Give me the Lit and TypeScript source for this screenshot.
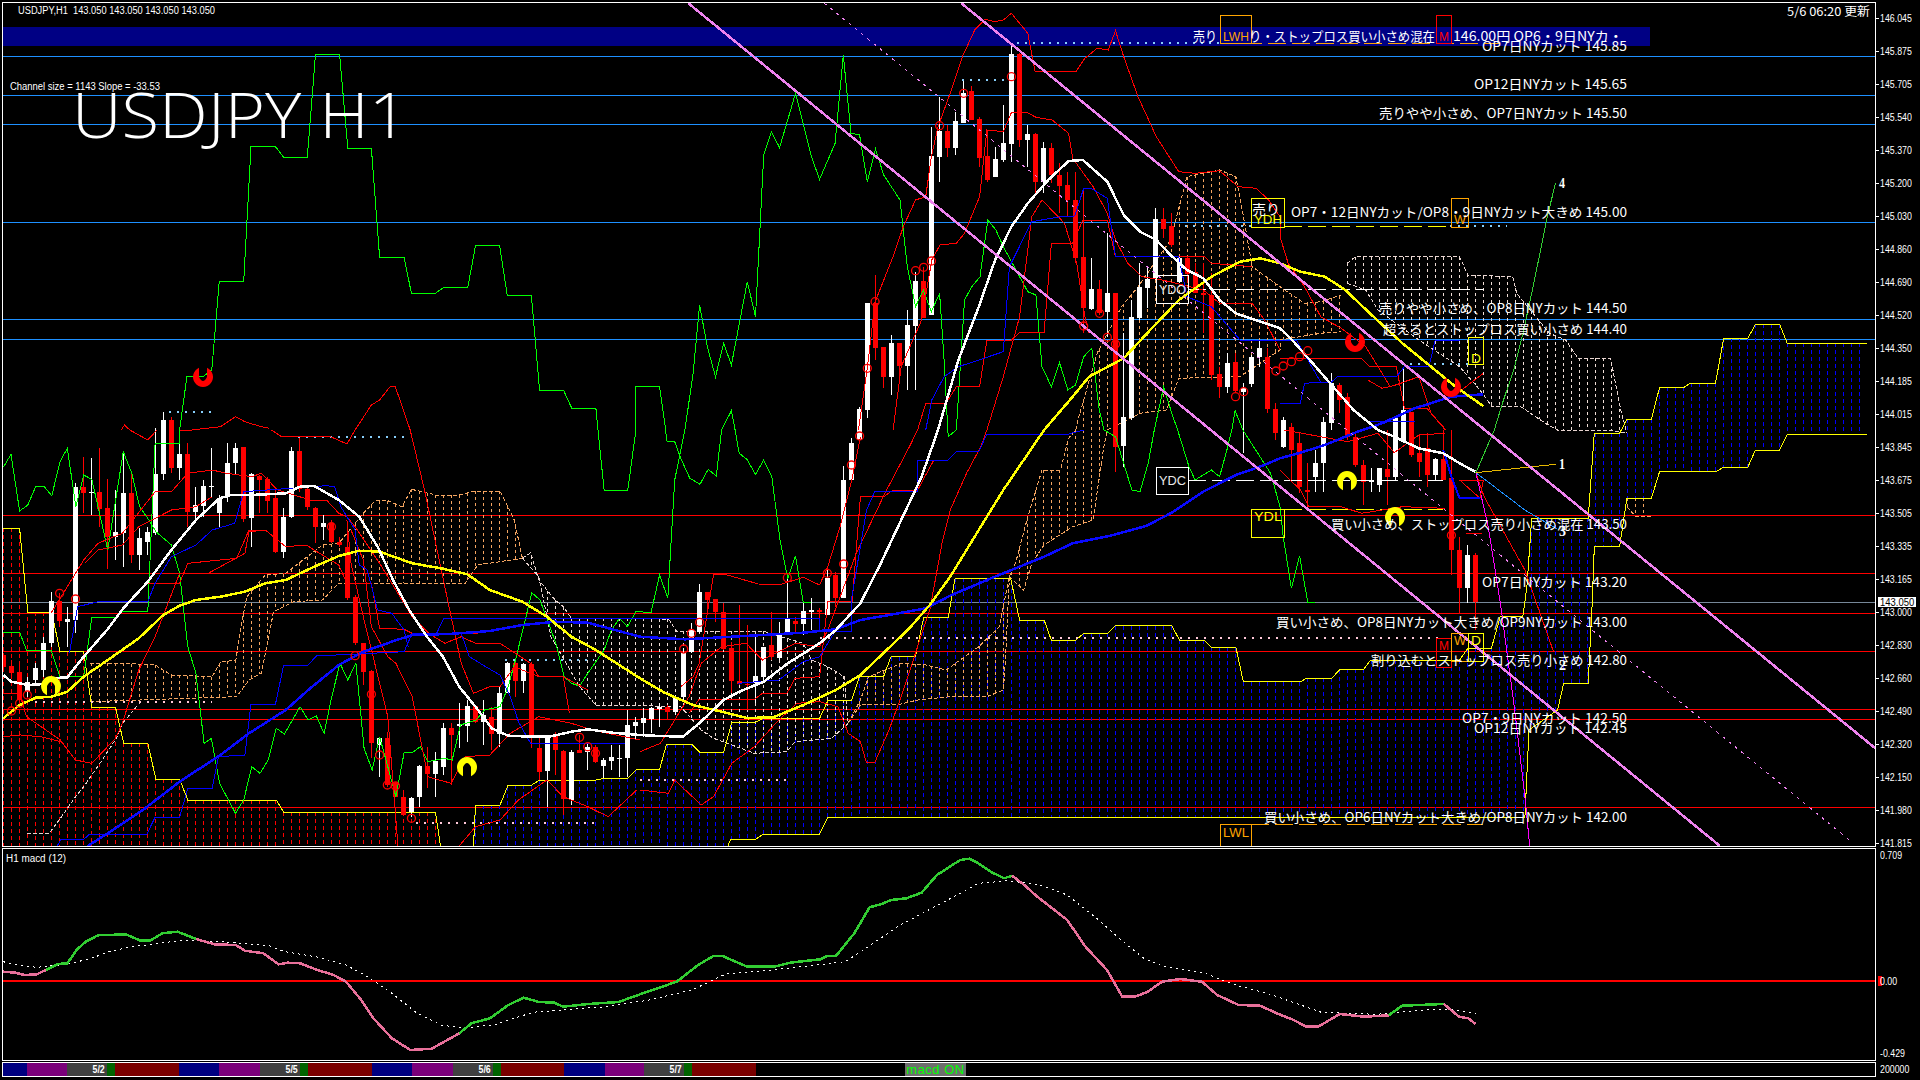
import { LitElement, html, svg, css } from 'lit';
import { customElement } from 'lit/decorators.js';

type Pt = [number, number];
const TILES: Record<string, [number, number, number]> = {
  A: [0, 0, 2.45], B: [640, 0, 2.45], C: [1280, 0, 2.45],
  D: [0, 430, 2.45], E: [640, 430, 2.45], F: [1280, 430, 2.45],
  M: [0, 830, 1.633], N: [960, 830, 1.633],
};
const p = (t: string, a: number[]): Pt[] => {
  const [x0, y0, s] = TILES[t];
  const out: Pt[] = [];
  for (let i = 0; i + 1 < a.length; i += 2) out.push([x0 + a[i] / s, y0 + a[i + 1] / 3]);
  return out;
};
const str = (pts: Pt[]) => pts.map((q) => `${q[0].toFixed(1)},${q[1].toFixed(1)}`).join(' ');
const yAt = (poly: Pt[], x: number): number => {
  for (let i = 0; i + 1 < poly.length; i++) {
    const a = poly[i], b = poly[i + 1];
    if (x >= a[0] && x <= b[0]) {
      if (b[0] === a[0]) return a[1];
      return a[1] + ((b[1] - a[1]) * (x - a[0])) / (b[0] - a[0]);
    }
  }
  return NaN;
};

/* ---------- ichimoku spans ---------- */
const Y1: Pt[] = [
  ...p('D', [0, 1600, 1155, 1600, 1160, 1248, 1165, 1125, 1225, 1125, 1245, 1065, 1303, 1065, 1322, 1050, 1460, 1050, 1480, 1045, 1538, 1045, 1558, 1020, 1568, 1018]),
  ...p('E', [0, 1018, 48, 1018, 65, 943, 127, 943, 147, 967, 205, 967, 225, 877, 283, 877, 303, 865, 440, 865, 460, 812, 518, 812, 538, 739, 597, 739, 615, 680, 675, 680, 695, 562, 755, 562, 772, 445, 908, 445, 930, 570, 990, 570, 1008, 631, 1067, 631, 1087, 610, 1146, 610, 1165, 587, 1303, 587, 1322, 631, 1382, 631, 1400, 652, 1460, 652, 1478, 755, 1568, 755]),
  ...p('F', [0, 755, 50, 755, 65, 745, 127, 745, 147, 718, 205, 718, 222, 690, 440, 690, 460, 655, 518, 655, 540, 558, 595, 558, 605, 470, 615, 295, 615, 265, 755, 265, 770, 10, 832, 10]),
  ...p('C', [850, 1258, 910, 1258, 930, 1162, 990, 1162, 1005, 1150, 1067, 1150, 1087, 1015, 1146, 1015, 1165, 973, 1224, 973, 1243, 1030, 1437, 1030]),
];
const Y2: Pt[] = [
  ...p('D', [8, 295, 48, 295, 68, 547, 127, 547, 147, 665, 205, 665, 225, 832, 283, 832, 303, 940, 362, 940, 382, 1048, 440, 1048, 460, 1110, 677, 1110, 695, 1147, 1067, 1147, 1083, 1280]),
  ...p('E', [205, 1280, 222, 1228, 283, 1228, 303, 1212, 440, 1212, 460, 1162, 1568, 1162]),
  ...p('F', [0, 1162, 600, 1162, 610, 900, 680, 840, 695, 760, 755, 760, 765, 520, 770, 350, 832, 350, 850, 205, 910, 205, 930, 125, 1067, 125, 1087, 112, 1146, 112, 1165, 60, 1224, 60, 1243, 12, 1437, 12]),
];

const BOTTOM = 846;
const hatchLines: { x: number; a: number; b: number; cls: string }[] = [];
for (let i = 0; i < 233; i++) {
  const x = 3.5 + 8 * i;
  const a = yAt(Y1, x), b = yAt(Y2, x);
  if (isNaN(a) || isNaN(b)) continue;
  const top = Math.min(a, b), bot = Math.min(Math.max(a, b), BOTTOM);
  if (top >= bot) continue;
  hatchLines.push({ x, a: top, b: bot, cls: a < b ? 'h-blue' : 'h-red' });
}

/* ---------- second (dashed outline) cloud ---------- */
const clouds: { top: Pt[]; bot: Pt[]; cls: string }[] = [
  {
    top: p('D', [220, 700, 305, 700, 380, 705, 420, 735, 520, 740, 540, 697, 578, 690, 590, 590, 605, 500, 650, 435, 700, 430, 790, 345, 830, 340, 890, 250, 920, 212, 950, 212, 985, 230, 1008, 178, 1068, 195, 1125, 195, 1165, 183, 1225, 183, 1260, 270, 1280, 385]),
    bot: p('D', [220, 815, 580, 800, 610, 750, 640, 730, 660, 610, 670, 545, 720, 515, 790, 510, 830, 460, 1140, 460, 1170, 405, 1280, 385]),
    cls: 'sandy',
  },
  {
    top: [...p('D', [1280, 385, 1300, 368, 1320, 450, 1360, 510, 1380, 530, 1400, 565, 1568, 565]), ...p('E', [0, 565, 70, 568, 90, 603, 300, 603, 400, 640, 420, 690, 460, 710, 500, 740, 510, 880])],
    bot: [...p('D', [1280, 385, 1320, 440, 1350, 620, 1420, 770, 1460, 825, 1568, 825]), ...p('E', [0, 827, 100, 830, 150, 900, 180, 925, 280, 970, 360, 965, 380, 935, 470, 925, 510, 880])],
    cls: 'pale',
  },
  {
    top: p('E', [510, 880, 540, 810, 560, 740, 640, 700, 700, 705, 750, 720, 830, 650, 880, 590, 895, 500, 905, 440]),
    bot: p('E', [510, 880, 540, 825, 640, 822, 680, 810, 760, 800, 850, 800, 890, 780, 895, 700, 905, 440]),
    cls: 'sandy',
  },
  {
    top: [...p('E', [905, 440, 920, 400, 950, 260, 985, 120, 1030, 120, 1050, 25, 1068, 0]), ...p('B', [1075, 1250, 1120, 1060, 1180, 920, 1220, 860, 1300, 720, 1340, 530, 1420, 510, 1460, 530, 1480, 660, 1500, 800, 1568, 860]), ...p('C', [0, 860, 60, 910, 100, 905, 150, 885])],
    bot: [...p('E', [905, 440, 940, 480, 960, 400, 990, 345, 1060, 290, 1110, 270, 1135, 60, 1145, 0]), ...p('B', [1145, 1290, 1225, 1240, 1290, 1230, 1320, 1135, 1470, 1130, 1568, 1050]), ...p('C', [0, 1020, 100, 1000, 150, 995])],
    cls: 'sandy',
  },
  {
    top: p('C', [165, 790, 185, 770, 440, 770, 460, 825, 570, 830, 580, 880, 660, 1000, 700, 1020, 730, 1075, 810, 1075, 835, 1230, 850, 1300]),
    bot: p('C', [165, 850, 210, 870, 240, 930, 340, 1020, 440, 1100, 490, 1170, 520, 1220, 590, 1220, 650, 1270, 680, 1290, 800, 1290, 850, 1300]),
    cls: 'pale',
  },
  { top: p('F', [850, 205, 910, 205]), bot: p('F', [850, 230, 870, 258, 910, 258]), cls: 'sandy' },
];

/* ---------- candles: u, bodyTop, bodyBottom, high, low, colour ---------- */
type C = [number, number, number, number, number, string];
const groups: [string, C[]][] = [
  ['D', [
    [8, 675, 712, 670, 720, 'r'], [28, 708, 728, 690, 740, 'r'], [48, 725, 810, 700, 830, 'r'], [68, 755, 785, 740, 800, 'w'],
    [87, 715, 750, 700, 760, 'w'], [107, 640, 720, 620, 740, 'w'], [126, 513, 640, 485, 650, 'w'], [146, 513, 572, 490, 590, 'r'],
    [165, 568, 575, 530, 650, 'w'], [185, 172, 570, 160, 610, 'w'], [205, 172, 190, 82, 250, 'r'], [224, 186, 190, 85, 255, 'w'],
    [243, 186, 237, 55, 290, 'r'], [263, 235, 320, 148, 418, 'r'], [283, 305, 320, 180, 390, 'w'], [302, 188, 308, 65, 410, 'w'],
    [322, 190, 375, 122, 400, 'r'], [342, 325, 375, 295, 420, 'w'], [361, 305, 335, 290, 375, 'w'], [381, 132, 308, -5, 315, 'w'],
    [401, -30, 132, -55, 150, 'w'], [420, -30, 115, -40, 130, 'r'], [440, 72, 115, 40, 150, 'w'], [459, 72, 245, 40, 290, 'r'],
    [479, 225, 245, 170, 280, 'w'], [499, 168, 228, 150, 260, 'w'], [518, 168, 172, 55, 200, 'w'], [538, 205, 250, 195, 295, 'w'],
    [557, 98, 195, 40, 215, 'w'], [577, 55, 100, 40, 135, 'w'], [597, 52, 268, 50, 275, 'r'], [616, 132, 265, 130, 350, 'w'],
    [636, 138, 150, 135, 250, 'r'], [655, 147, 212, 140, 250, 'r'], [675, 205, 365, 180, 370, 'r'], [695, 262, 365, 235, 385, 'w'],
    [714, 62, 260, 50, 265, 'w'], [734, 62, 178, 25, 185, 'r'], [754, 178, 232, 175, 240, 'r'], [773, 235, 290, 230, 340, 'r'],
    [793, 280, 290, 255, 330, 'w'], [812, 280, 335, 270, 340, 'r'], [832, 335, 345, 320, 350, 'r'], [851, 350, 505, 285, 510, 'r'],
    [871, 502, 640, 495, 645, 'r'], [890, 640, 725, 640, 765, 'r'], [910, 722, 940, 720, 985, 'r'], [930, 925, 945, 920, 1040, 'w'],
    [949, 925, 1065, 905, 1070, 'r'], [969, 1060, 1100, 1055, 1100, 'r'], [989, 1100, 1155, 1080, 1155, 'r'], [1008, 1105, 1145, 1100, 1160, 'w'],
    [1028, 1008, 1100, 1005, 1130, 'w'], [1047, 1008, 1032, 950, 1075, 'r'], [1067, 992, 1032, 965, 1100, 'w'], [1087, 895, 1010, 880, 1035, 'w'],
    [1106, 895, 915, 880, 1065, 'r'], [1126, 882, 888, 820, 955, 'w'], [1145, 828, 888, 810, 935, 'w'], [1165, 828, 875, 825, 880, 'r'],
    [1185, 855, 875, 810, 945, 'w'], [1204, 862, 912, 830, 960, 'r'], [1224, 788, 912, 770, 950, 'w'], [1243, 700, 790, 695, 790, 'w'],
    [1263, 700, 752, 695, 800, 'r'], [1283, 702, 752, 700, 790, 'w'], [1302, 702, 920, 695, 955, 'r'], [1322, 955, 1025, 920, 1050, 'r'],
    [1342, 920, 1022, 915, 1130, 'w'], [1361, 918, 960, 905, 1035, 'r'], [1381, 962, 1108, 960, 1155, 'r'], [1401, 965, 1110, 960, 1125, 'w'],
    [1420, 960, 968, 915, 970, 'r'], [1440, 950, 965, 940, 1020, 'w'], [1459, 950, 995, 945, 1000, 'r'], [1479, 990, 1008, 985, 1045, 'w'],
    [1499, 982, 992, 945, 1020, 'w'], [1518, 985, 988, 945, 1040, 'w'], [1538, 885, 985, 840, 1040, 'w'], [1558, 875, 888, 860, 930, 'w'],
  ]],
  ['E', [
    [8, 865, 880, 835, 920, 'w'], [28, 835, 868, 830, 910, 'w'], [47, 832, 836, 820, 890, 'w'], [67, 832, 845, 825, 870, 'r'],
    [87, 805, 845, 795, 855, 'w'], [107, 670, 800, 655, 815, 'w'], [126, 600, 665, 580, 670, 'w'], [146, 487, 605, 462, 610, 'w'],
    [165, 487, 510, 487, 545, 'r'], [185, 508, 545, 508, 575, 'r'], [205, 545, 658, 520, 660, 'r'], [224, 655, 752, 635, 790, 'r'],
    [243, 752, 762, 525, 765, 'r'], [263, 762, 765, 585, 840, 'r'], [283, 738, 758, 620, 820, 'w'], [302, 650, 740, 650, 760, 'w'],
    [322, 645, 682, 545, 690, 'r'], [342, 612, 685, 575, 690, 'w'], [361, 563, 605, 440, 610, 'w'], [381, 573, 582, 560, 610, 'r'],
    [401, 543, 582, 515, 615, 'w'], [420, 540, 545, 505, 600, 'w'], [440, 540, 545, 535, 600, 'r'], [459, 445, 555, 410, 555, 'w'],
    [479, 435, 505, 425, 530, 'r'], [499, 150, 505, 108, 505, 'w'], [518, 38, 150, 25, 155, 'w'], [538, -62, 30, -70, 35, 'w'],
  ]],
  ['B', [
    [557, 910, 1230, 910, 1255, 'w'], [577, 910, 1043, 825, 1080, 'r'], [597, 1042, 1130, 1040, 1165, 'r'], [616, 1030, 1130, 1005, 1185, 'w'],
    [636, 1030, 1098, 1030, 1130, 'r'], [655, 975, 1098, 930, 1170, 'w'], [675, 843, 978, 815, 1170, 'w'], [695, 843, 955, 800, 955, 'r'],
    [714, 468, 945, 380, 945, 'w'], [734, 392, 470, 290, 545, 'w'], [754, 392, 443, 375, 470, 'r'], [773, 362, 443, 335, 465, 'w'],
    [793, 280, 368, 240, 370, 'w'], [812, 273, 360, 258, 360, 'r'], [832, 358, 473, 350, 500, 'r'], [851, 468, 540, 390, 545, 'r'],
    [871, 478, 530, 440, 530, 'w'], [890, 430, 480, 315, 485, 'w'], [910, 162, 432, 135, 485, 'w'], [930, 162, 420, 160, 440, 'r'],
    [949, 403, 420, 375, 500, 'w'], [969, 403, 545, 400, 580, 'r'], [989, 445, 545, 425, 580, 'w'], [1008, 445, 525, 430, 550, 'r'],
    [1028, 525, 558, 490, 640, 'r'], [1047, 555, 600, 515, 650, 'r'], [1067, 600, 775, 515, 790, 'r'], [1087, 772, 925, 565, 1000, 'r'],
    [1106, 868, 928, 775, 930, 'w'], [1126, 868, 938, 840, 945, 'r'], [1145, 880, 935, 700, 1010, 'w'], [1165, 880, 1340, 880, 1415, 'r'],
    [1185, 1250, 1338, 1000, 1400, 'w'], [1204, 950, 1255, 900, 1260, 'w'], [1224, 860, 955, 790, 960, 'w'], [1243, 838, 865, 800, 925, 'w'],
    [1263, 657, 835, 625, 840, 'w'], [1283, 658, 688, 625, 715, 'r'], [1302, 678, 735, 640, 740, 'r'], [1322, 775, 845, 770, 850, 'w'],
    [1342, 773, 822, 770, 850, 'r'], [1361, 815, 878, 790, 880, 'r'], [1381, 878, 885, 790, 1000, 'r'], [1401, 885, 1125, 820, 1140, 'r'],
    [1420, 1122, 1160, 1100, 1195, 'r'], [1440, 1088, 1160, 1060, 1180, 'w'], [1459, 1085, 1172, 1060, 1180, 'r'], [1479, 1165, 1175, 1150, 1360, 'w'],
    [1499, 1070, 1152, 1065, 1160, 'w'], [1518, 1045, 1070, 1020, 1100, 'w'], [1538, 1070, 1228, 1045, 1240, 'r'], [1558, 1228, 1300, 1210, 1320, 'r'],
  ]],
  ['C', [
    [8, 1260, 1340, 1250, 1345, 'w'], [28, 1280, 1350, 1270, 1440, 'r'], [48, 1330, 1460, 1300, 1480, 'r'], [68, 1470, 1475, 1390, 1520, 'r'],
    [87, 1390, 1430, 1350, 1475, 'w'], [107, 1265, 1388, 1250, 1475, 'w'], [127, 1150, 1270, 1120, 1290, 'w'], [146, 1155, 1200, 1150, 1240, 'r'],
    [165, 1190, 1310, 1180, 1320, 'r'], [185, 1310, 1395, 1300, 1400, 'r'], [205, 1395, 1445, 1380, 1515, 'r'], [224, 1440, 1445, 1405, 1475, 'w'],
    [243, 1405, 1455, 1405, 1475, 'w'], [263, 1408, 1430, 1290, 1515, 'r'], [283, 1255, 1430, 1250, 1440, 'w'], [302, 1230, 1325, 1100, 1330, 'w'],
    [322, 1235, 1365, 1235, 1370, 'r'], [342, 1360, 1385, 1305, 1430, 'r'], [361, 1345, 1425, 1300, 1460, 'r'], [381, 1377, 1425, 1375, 1440, 'w'],
    [401, 1377, 1440, 1290, 1440, 'r'], [420, 1435, 1650, 1290, 1725, 'r'], [440, 1650, 1765, 1610, 1840, 'r'], [459, 1665, 1765, 1635, 1810, 'w'],
    [479, 1665, 1807, 1660, 1890, 'r'],
  ]],
];
const candles: { wx: number; hi: number; lo: number; bx: number; t: number; h: number; cls: string }[] = [];
for (const [t, rows] of groups) {
  const [x0, y0, s] = TILES[t];
  for (const r of rows) {
    const i = Math.round((x0 + r[0] / s - 3.6) / 8);
    const left = 1 + 8 * i;
    candles.push({
      wx: left + 2.5,
      hi: y0 + r[3] / 3,
      lo: y0 + r[4] / 3,
      bx: left,
      t: y0 + r[1] / 3,
      h: Math.max(1, (r[2] - r[1]) / 3),
      cls: r[5] === 'w' ? 'c-w' : 'c-r',
    });
  }
}

const rings: Pt[] = [
  ...p('D', [146, 490, 185, 507, 67, 795, 48, 820, 28, 843, 870, 677, 910, 793, 812, 290, 930, 975, 949, 1065, 969, 1068, 1008, 1165, 1420, 922, 1440, 950, 1459, 970]),
  ...p('E', [107, 657, 126, 610, 146, 577, 361, 443, 459, 430, 499, 402, 518, 105, 538, 18]),
  ...p('B', [557, 1105, 576, 905, 675, 812, 695, 802, 714, 783, 734, 377, 793, 280, 910, 230, 1087, 978, 1126, 940, 1145, 1012, 1165, 1032, 1459, 1190, 1479, 1175, 1558, 1113]),
  ...p('C', [8, 1098, 28, 1085, 48, 1070, 68, 1052]),
  ...p('F', [420, 316]),
];

/* ---------- indicator lines ---------- */
const lines: [string, Pt[]][] = [
  ['green', [
    ...p('D', [8, 607, 48, 607, 65, 660, 125, 660, 147, 740, 205, 740, 225, 562, 283, 562, 300, 545, 362, 545, 380, 40, 440, 40, 440, 0]),
    ...p('A', [458, 1130, 497, 1130, 519, 1110, 537, 845, 597, 845, 615, 440, 675, 440, 695, 472, 753, 472, 773, 163, 832, 163, 852, 445, 910, 445, 930, 772, 990, 772, 1008, 880, 1067, 880, 1087, 862, 1146, 862, 1165, 737, 1224, 737, 1243, 886, 1302, 886, 1322, 1172, 1381, 1172, 1401, 1225, 1460, 1225]),
    ...p('D', [1465, 0, 1480, 180, 1538, 180, 1558, 0]),
    ...p('A', [1558, 1158, 1568, 1158]),
    ...p('B', [48, 1160, 63, 1290]),
    ...p('E', [65, 33, 85, 35, 100, 85, 122, 145, 147, 163, 167, 118, 187, 138, 200, 0]),
    ...p('B', [224, 1232, 233, 1290]),
    ...p('E', [243, 70, 262, 88, 283, 133, 303, 90, 323, 140, 343, 330, 362, 445, 381, 378, 400, 517, 418, 517]),
  ]],
  ['green', [
    ...p('D', [8, 112, 27, 73, 48, 243, 68, 225, 88, 168, 107, 168, 127, 197, 147, 95, 165, 55, 186, 230, 205, 135, 225, 148, 264, 360, 302, 65, 323, 130, 342, 230, 362, 265, 382, 305, 420, 345, 440, 430, 460, 650, 480, 730, 500, 940, 518, 925, 538, 1060, 577, 1150, 597, 1110, 617, 1010, 637, 1030, 657, 990, 677, 895, 697, 912, 735, 830, 755, 870, 775, 858, 794, 910, 813, 800, 833, 700, 852, 750, 872, 700, 892, 955, 912, 1020, 930, 920, 950, 1010, 970, 1100, 990, 968, 1010, 968, 1030, 950, 1048, 995, 1088, 985, 1108, 990, 1128, 885, 1167, 870, 1187, 840, 1225, 830, 1245, 770, 1265, 680, 1303, 488, 1323, 510, 1362, 640, 1382, 740, 1400, 760, 1420, 768, 1440, 730, 1480, 660, 1498, 600, 1518, 565, 1537, 590, 1558, 545, 1568, 545]),
    ...p('E', [27, 548, 48, 435, 68, 505, 85, 150, 110, 0]),
    ...p('B', [130, 1120, 146, 915, 165, 1040, 185, 1130, 205, 1030, 224, 1095, 263, 845, 283, 950, 303, 465, 322, 395, 342, 443, 381, 280, 420, 470, 440, 538, 478, 430, 498, 165, 517, 400, 538, 405, 557, 545, 577, 447, 597, 525, 637, 600, 655, 800, 672, 900, 675, 920, 694, 870, 714, 935, 734, 880, 745, 1080, 755, 1310, 775, 1290, 795, 900, 813, 860, 833, 830, 852, 660, 872, 690, 890, 740, 950, 875, 970, 885, 985, 1100, 1008, 1160, 1028, 1088, 1048, 1170, 1067, 1155, 1087, 1070, 1107, 1045, 1125, 1230, 1137, 1290]),
    ...p('E', [1165, 20, 1185, 100, 1205, 180, 1225, 185, 1245, 100, 1260, 0]),
    ...p('B', [1283, 1160, 1303, 1240, 1317, 1290]),
    ...p('E', [1345, 110, 1360, 150, 1400, 120, 1420, 140, 1438, 60, 1450, 0]),
    ...p('B', [1458, 1232, 1477, 1290]),
    ...p('E', [1545, 130, 1568, 230]),
    ...p('F', [8, 322, 28, 475, 48, 378, 68, 517, 85, 517]),
  ]],
  ['green2', [...p('F', [480, 128, 525, 0]), ...p('C', [545, 1210, 575, 1100, 595, 1000, 620, 860, 655, 650, 675, 550])]],
  ['gold', p('F', [480, 128, 675, 103])],
  ['sky', p('F', [480, 128, 600, 240, 680, 298])],
  ['red', p('F', [480, 128, 500, 200, 600, 420, 670, 665])],
  ['magenta', p('F', [480, 128, 510, 290, 540, 520, 575, 840, 600, 1100, 612, 1250])],

  /* red thin */
  ['red', p('D', [125, 550, 165, 470, 205, 390, 240, 340, 300, 310, 380, 185, 420, 185, 460, 130, 520, 120, 555, 130, 617, 140, 640, 130, 680, 180, 760, 210, 800, 210, 830, 250, 850, 260, 870, 290, 930, 400, 970, 480, 1010, 560, 1050, 610, 1090, 640, 1130, 620, 1165, 640, 1225, 640, 1300, 700, 1320, 740, 1380, 740, 1440, 780])],
  ['red', p('D', [362, 460, 440, 460, 460, 400, 580, 385, 610, 300, 650, 300, 700, 350, 750, 345, 830, 405, 850, 460, 910, 460, 930, 595, 990, 598, 1010, 610, 1170, 610])],
  ['red', p('D', [208, 400, 240, 360, 300, 345, 340, 290, 420, 240, 480, 230, 520, 200])],
  ['red', p('D', [8, 790, 48, 790, 65, 860, 148, 930, 185, 990, 225, 1000, 283, 925, 300, 880, 340, 720, 380, 620, 440, 430, 510, 430, 600, 370, 610, 305, 650, 300])],
  ['red', p('D', [860, 300, 890, 390, 910, 590, 950, 680, 970, 700, 1010, 800, 1048, 1040, 1105, 1060, 1140, 980, 1200, 975, 1250, 910, 1320, 860, 1400, 880, 1450, 900, 1568, 930])],
  ['red', p('D', [850, 270, 860, 400, 890, 560, 950, 860, 975, 1248])],
  ['red', p('D', [1125, 1248, 1165, 1190, 1225, 1170, 1270, 1110, 1340, 1050, 1380, 1100, 1440, 1130, 1490, 1160, 1560, 1080])],
  ['red', p('D', [8, 920, 50, 915, 100, 920, 150, 935, 185, 990])],
  ['red', [...p('A', [297, 1290, 305, 1275, 318, 1290]), ...p('D', [362, 30, 385, 0])]],
  ['red', p('A', [440, 1290, 470, 1290, 540, 1280, 577, 1250, 600, 1265, 640, 1280, 660, 1285])],
  ['red', [...p('A', [870, 1290, 910, 1215, 930, 1200, 957, 1158, 968, 1158, 1005, 1290]), ...p('D', [1040, 180, 1100, 530, 1130, 700, 1160, 790, 1200, 770, 1225, 770, 1260, 710, 1320, 740, 1380, 740, 1395, 850])]],
  ['red', p('D', [665, 0, 690, 20, 810, 20, 850, 42, 870, 0])],
  ['red', p('E', [0, 965, 50, 940, 80, 880, 120, 800, 150, 700, 200, 650, 260, 640, 300, 690, 380, 640, 440, 650, 460, 600, 530, 370, 600, 190, 660, 50, 680, 0])],
  ['red', [...p('E', [0, 1080, 70, 1090, 85, 1050, 150, 1125, 180, 1100, 225, 1000, 280, 950, 340, 870, 385, 820, 440, 815, 485, 830, 510, 910, 540, 935, 555, 998, 575, 998, 610, 900, 640, 800, 680, 650, 710, 540, 740, 340, 760, 240, 800, 130, 835, 50, 850, 0]), ...p('B', [890, 1130, 930, 950, 960, 650, 985, 600, 1040, 670, 1070, 790, 1090, 950, 1100, 1000])]],
  ['red', p('E', [100, 770, 130, 740, 145, 700, 180, 435, 205, 432, 290, 462, 340, 465, 400, 442, 440, 465, 460, 410, 490, 290, 520, 145, 540, 20])],
  ['red', p('E', [120, 850, 145, 808, 280, 808, 300, 790, 360, 790, 380, 745, 440, 740, 460, 515, 520, 515, 540, 200, 597, 200, 620, 180, 680, 180, 720, 90])],
  ['red', p('B', [680, 1290, 700, 1210, 750, 1210, 775, 1160, 832, 1160, 850, 1020, 910, 1020, 930, 998, 990, 998, 1008, 730, 1060, 730, 1085, 660, 1145, 660, 1165, 770, 1383, 770, 1400, 790, 1500, 800])],
  ['red', p('B', [620, 1290, 640, 1100, 690, 960, 715, 780, 735, 735, 775, 730, 795, 700, 832, 590, 850, 390, 890, 395, 910, 338, 950, 338, 970, 352, 1010, 360, 1050, 400, 1060, 475, 1110, 560, 1145, 640, 1165, 720, 1195, 790, 1230, 830, 1280, 840, 1380, 870, 1420, 910, 1500, 910, 1530, 960, 1568, 1050])],
  ['red', [...p('B', [535, 1290, 557, 1105, 576, 905, 620, 770, 645, 680, 675, 600, 700, 590, 714, 470, 730, 380, 760, 280, 790, 170, 820, 90, 845, 58, 870, 65, 890, 60, 910, 40, 950, 100, 968, 215, 1068, 215, 1090, 175, 1120, 145, 1147, 150, 1165, 92, 1185, 170, 1220, 290, 1265, 410, 1320, 515, 1360, 520, 1420, 512, 1465, 560, 1510, 565, 1540, 600, 1568, 650]), ...p('C', [0, 710, 20, 790, 60, 860, 100, 950, 150, 985, 210, 1040, 240, 1100, 270, 1160, 340, 1130, 370, 1240, 400, 1280])]],
  ['red', p('C', [0, 1075, 200, 1075, 220, 1100, 285, 1100, 305, 1225, 360, 1225, 405, 1290])],
  ['red', p('C', [215, 1140, 250, 1165, 285, 1155, 340, 1130])],
  ['red', p('C', [440, 1180, 450, 1165, 498, 1120])],
  ['red', p('F', [10, 0, 100, 20, 165, 35, 240, 10, 280, 68, 340, 15, 405, 10])],
  ['red', p('F', [0, 120, 50, 180, 70, 228, 145, 228, 200, 250, 300, 230, 405, 235])],
  ['red', p('F', [440, 150, 498, 150, 490, 205, 440, 150])],
  ['red', p('F', [455, 310, 495, 312])],

  /* blue thin */
  ['blue', p('D', [140, 1248, 150, 1228, 205, 1228, 220, 1212, 360, 1212, 380, 1162, 440, 1162, 460, 1075, 520, 1075, 535, 980, 600, 975, 615, 822, 675, 822, 695, 705, 755, 705, 775, 678, 990, 665, 1010, 610, 1070, 610, 1087, 565, 1568, 565])],
  ['blue', p('D', [170, 670, 190, 530, 240, 515, 362, 515, 380, 460, 420, 380, 480, 345, 520, 300, 575, 280, 597, 185, 800, 167, 820, 170, 835, 230, 870, 300, 880, 405, 900, 420, 925, 540, 960, 550, 990, 600, 1000, 650])],
  ['blue', p('D', [1130, 610, 1150, 680, 1190, 710, 1225, 735, 1250, 800, 1270, 875, 1300, 940, 1530, 940])],
  ['blue', p('E', [0, 565, 440, 565, 440, 605, 518, 605, 518, 510, 555, 240, 575, 185, 680, 185, 680, 90, 755, 90, 775, 65, 830, 65, 850, 12, 1050, 12, 1087, 0])],
  ['blue', p('E', [240, 760, 340, 750, 400, 695, 440, 680, 475, 610])],
  ['blue', p('B', [700, 1290, 715, 1200, 745, 1130, 780, 1100, 830, 1080, 890, 1055, 905, 800, 960, 665, 1030, 650, 1065, 648, 1087, 565, 1105, 565, 1145, 595, 1165, 770, 1320, 770, 1340, 890, 1400, 920, 1470, 1020, 1568, 1020])],
  ['blue', p('C', [0, 1020, 40, 1020, 100, 1147, 125, 1148, 140, 1130, 285, 1130, 305, 1100, 365, 1100, 380, 1022, 440, 1022])],
  ['blue', p('C', [0, 1210, 50, 1210, 60, 1150, 100, 1147])],
  ['blue', p('C', [215, 1265, 290, 1265, 330, 1265])],
  ['blue-b', p('F', [400, 60, 420, 140, 440, 205, 490, 205])],

  /* moving averages */
  ['blue-t', [
    ...p('D', [215, 1248, 270, 1205, 350, 1140, 440, 1055, 540, 975, 610, 910, 700, 840, 760, 775, 830, 705, 890, 665, 960, 635, 1010, 615, 1100, 612, 1200, 603, 1280, 585, 1360, 575, 1440, 578, 1568, 620]),
    ...p('E', [110, 628, 200, 622, 300, 615, 400, 608, 480, 598, 540, 570, 610, 555, 700, 535, 760, 497, 850, 450, 910, 420, 990, 380, 1060, 340, 1150, 318, 1240, 288, 1300, 250, 1380, 185, 1460, 135, 1530, 105, 1568, 85]),
    ...p('F', [50, 68, 110, 45, 190, 5]),
    ...p('C', [250, 1270, 330, 1225, 420, 1190, 498, 1183]),
  ]],
  ['yellow-t', [
    ...p('D', [8, 865, 48, 825, 88, 803, 127, 800, 165, 785, 205, 740, 264, 690, 340, 625, 400, 555, 440, 527, 480, 510, 540, 500, 600, 485, 650, 460, 700, 450, 770, 410, 830, 378, 880, 362, 930, 365, 1010, 400, 1080, 415, 1145, 433, 1200, 480, 1280, 515, 1340, 560, 1400, 620, 1460, 660, 1568, 745]),
    ...p('E', [60, 788, 130, 825, 200, 845, 265, 865, 330, 860, 400, 825, 480, 780, 540, 735, 600, 665, 660, 595, 710, 525, 760, 440, 810, 340, 850, 260, 890, 180, 940, 90, 990, 0]),
    ...p('B', [1060, 1190, 1100, 1130, 1185, 1075, 1250, 990, 1320, 900, 1400, 830, 1470, 785, 1520, 775, 1568, 790]),
    ...p('C', [50, 815, 110, 830, 160, 870, 220, 940, 300, 1030, 370, 1100, 430, 1160, 498, 1218]),
  ]],
  ['white-t', [
    ...p('D', [8, 735, 28, 755, 68, 765, 107, 762, 127, 745, 165, 742, 205, 680, 264, 597, 302, 535, 362, 455, 420, 360, 480, 270, 538, 205, 565, 195, 617, 195, 700, 190, 735, 170, 770, 168, 830, 210, 880, 260, 925, 350, 965, 455, 1005, 545, 1045, 618, 1085, 680, 1125, 770, 1165, 830, 1205, 895, 1245, 917, 1300, 920, 1345, 920, 1400, 905, 1440, 898, 1500, 908, 1568, 915]),
    ...p('E', [50, 918, 105, 920, 145, 880, 205, 810, 243, 785, 303, 755, 362, 700, 440, 640, 480, 600, 540, 520, 590, 400, 640, 270, 690, 140, 730, 0]),
    ...p('B', [780, 1080, 830, 920, 870, 780, 910, 680, 950, 610, 1000, 540, 1050, 483, 1085, 480, 1145, 545, 1185, 645, 1225, 695, 1265, 720, 1300, 765, 1340, 810, 1380, 835, 1420, 900, 1460, 940, 1520, 965, 1568, 985]),
    ...p('C', [30, 1020, 80, 1090, 130, 1160, 180, 1230, 240, 1290]),
    ...p('F', [280, 20, 340, 55, 400, 70, 440, 100, 478, 125]),
  ]],
];

const levels: [string, number, number, number][] = [
  ['lv-sky', 1017, 1220, 43], ['lv-orange', 1220, 1500, 43],
  ['lv-sky', 1185, 1251, 226], ['lv-yellow', 1284, 1450, 226], ['lv-sky', 1450, 1507, 226],
  ['lv-white', 1188, 1484, 289], ['lv-white', 1188, 1443, 480],
  ['lv-yellow', 1284, 1443, 509], ['lv-orange', 1251, 1483, 824],
  ['lv-pink', 820, 1444, 638], ['lv-pink', 35, 212, 702], ['lv-pink', 416, 596, 823],
  ['lv-pink', 640, 787, 780], ['lv-sky', 298, 404, 437], ['lv-sky', 169, 211, 412],
  ['lv-sky', 962, 1009, 80], ['lv-sky', 505, 594, 660], ['lv-sky', 1402, 1470, 364],
];

const hLines: [string, number][] = [
  ['hl-blue', 56.5], ['hl-blue', 95.5], ['hl-blue', 124.5], ['hl-blue', 222.5], ['hl-blue', 319.5], ['hl-blue', 339.5],
  ['hl-red', 515.5], ['hl-red', 573.5], ['hl-gray', 602.5], ['hl-red', 613.5], ['hl-red', 651.5], ['hl-red', 709.5], ['hl-red', 719.5], ['hl-red', 807.5],
];

const labels: [string, number, number, number][] = [
  ['売り', 1193, 1217, 36],
  ['り・ストップロス買い小さめ混在', 1249, 1435, 36],
  ['146.00円 OP6・9日NYカ・', 1453, 1623, 36],
  ['OP7日NYカット 145.85', 1482, 1627, 46],
  ['OP12日NYカット 145.65', 1474, 1627, 84],
  ['売りやや小さめ、OP7日NYカット 145.50', 1379, 1627, 113],
  ['売り', 1252, 1280, 209],
  ['OP7・12日NYカット/OP8・9日NYカット大きめ 145.00', 1291, 1627, 212],
  ['売りやや小さめ、OP8日NYカット 144.50', 1379, 1627, 308],
  ['超えるとストップロス買い小さめ 144.40', 1383, 1627, 329],
  ['買い小さめ、ストップロス売り小さめ混在 143.50', 1331, 1627, 524],
  ['OP7日NYカット 143.20', 1482, 1627, 582],
  ['買い小さめ、OP8日NYカット大きめ/OP9NYカット 143.00', 1276, 1627, 622],
  ['割り込むとストップロス売り小さめ 142.80', 1371, 1627, 660],
  ['OP7・9日NYカット 142.50', 1462, 1627, 718],
  ['OP12日NYカット 142.45', 1474, 1627, 728],
  ['買い小さめ、OP6日NYカット大きめ/OP8日NYカット 142.00', 1264, 1627, 817],
];

const boxes: [string, string, number, number, number, number, number][] = [
  ['LWH', 'orange', 1220, 1251, 15, 43, 36], ['M', 'red', 1436, 1451, 15, 43, 36],
  ['YDH', 'yellow', 1251, 1284, 198, 227, 219], ['W', 'orange', 1451, 1468, 198, 227, 219],
  ['D', 'yellow', 1468, 1483, 337, 364, 358], ['YDO', 'white', 1156, 1188, 275, 303, 289],
  ['YDC', 'white', 1156, 1188, 467, 494, 480], ['YDL', 'yellow', 1251, 1284, 509, 537, 516],
  ['LWL', 'orange', 1220, 1251, 824, 846, 832], ['M', 'red', 1436, 1451, 638, 667, 645],
  ['W', 'orange', 1451, 1468, 633, 661, 640], ['D', 'yellow', 1468, 1483, 633, 661, 640],
];

const arches: [number, number, string][] = [
  [51, 686, 'y'], [467, 767, 'y'], [1347, 481, 'y'], [1395, 517, 'y'],
  [203, 377, 'r'], [1355, 342, 'r'], [1451, 387, 'r'],
];
/* a disc with a slot cut in from the open side: one closed outline */
const archPath = (cx: number, cy: number, k: string) => {
  const s = k === 'y' ? 1 : -1; // open side: +1 bottom, -1 top
  const edge = cy + s * 9.2;
  const sweep = k === 'y' ? 1 : 0;
  return `M${cx - 4} ${edge}A10 10 0 1 ${sweep} ${cx + 4} ${edge}L${cx + 4} ${cy}Q${cx} ${cy - s * 8} ${cx - 4} ${cy}Z`;
};

const macdSeg: [string, Pt[]][] = [
  ['m-pink', p('M', [5, 425, 25, 428, 40, 435, 60, 433, 75, 420])],
  ['m-green', p('M', [75, 420, 95, 402, 110, 400, 125, 360, 140, 335, 160, 316, 175, 315, 205, 313, 230, 332, 245, 332, 265, 310, 290, 305, 320, 327])],
  ['m-pink', p('M', [320, 327, 350, 343, 385, 345, 400, 362, 430, 370, 455, 403, 470, 398, 490, 400, 515, 418, 545, 435, 565, 455, 590, 510, 610, 565, 640, 625, 670, 660, 705, 656, 750, 610])],
  ['m-green', [...p('M', [750, 610, 770, 580, 800, 565, 830, 525, 855, 503, 880, 516, 905, 518, 920, 530, 960, 522, 1010, 516, 1050, 490, 1105, 455, 1140, 405, 1165, 378, 1180, 378, 1220, 410, 1265, 410, 1290, 398, 1340, 388, 1350, 378, 1365, 378, 1395, 310, 1420, 232, 1440, 222, 1455, 210, 1480, 205, 1505, 188, 1530, 135, 1568, 90]), ...p('N', [15, 86, 30, 100, 50, 125, 72, 145, 85, 137])]],
  ['m-pink', p('N', [85, 137, 105, 165, 125, 198, 175, 270, 205, 350, 240, 420, 265, 500, 285, 500, 305, 487, 330, 455, 360, 447, 395, 455, 420, 495, 455, 525, 490, 527, 520, 552, 545, 570, 565, 590, 585, 590, 620, 552, 660, 560, 700, 556])],
  ['m-green', p('N', [700, 556, 722, 527, 790, 522])],
  ['m-pink', p('N', [790, 522, 815, 560, 830, 565, 842, 582])],
];
const macdSignal: Pt[] = [
  ...p('M', [5, 395, 30, 405, 60, 412, 100, 405, 145, 388, 175, 367, 210, 352, 260, 340, 300, 330, 360, 335, 440, 347, 465, 365, 520, 382, 565, 405, 600, 440, 640, 490, 680, 548, 720, 585, 760, 595, 810, 583, 870, 547, 930, 538, 990, 530, 1060, 510, 1130, 480, 1185, 432, 1260, 420, 1380, 395, 1410, 360, 1470, 285, 1568, 190]),
  ...p('N', [30, 160, 80, 152, 130, 165, 175, 195, 220, 260, 260, 325, 300, 385, 330, 408, 400, 430, 450, 465, 510, 495, 590, 547, 680, 553, 760, 540, 800, 538, 842, 550]),
];

const ticks = ['146.045', '145.875', '145.705', '145.540', '145.370', '145.200', '145.030', '144.860', '144.690', '144.520', '144.350', '144.185', '144.015', '143.845', '143.675', '143.505', '143.335', '143.165', '143.000', '142.830', '142.660', '142.490', '142.320', '142.150', '141.980', '141.815'];

const txt = (t: string, x: number, x2: number, yc: number, size: number, cls: string) =>
  svg`<text class=${cls} x=${x} y=${yc + size * 0.38} font-size=${size} textLength=${x2 - x} lengthAdjust="spacingAndGlyphs">${t}</text>`;

@customElement('app-root')
export class AppRoot extends LitElement {
  static styles = css`
    :host { display: block; width: 1920px; height: 1080px; background: #000; overflow: hidden; color: #fff; font-family: "Liberation Sans", sans-serif; }
    .chart { display: flex; flex-direction: column; padding: 2px 0 0 2px; gap: 1px; }
    .row { display: flex; align-items: flex-start; flex: none; }
    .main { height: 845px; }
    .macd { height: 213px; }
    .strip { height: 15px; }
    .plot { width: 1874px; height: 100%; box-sizing: border-box; border: 1px solid #fff; flex: none; }
    .plot svg { display: block; }
    .strip .plot { display: flex; align-items: stretch; }
    .axis { position: relative; flex: 1; font-size: 11px; line-height: 12px; }
    .axis span { display: inline-block; transform: scaleX(0.8); transform-origin: left center; margin-left: 4px; white-space: nowrap; }
    .tick { height: 33px; line-height: 33px; position: relative; }
    .tick::before { content: ""; position: absolute; left: 0; top: 16px; width: 3px; height: 1px; background: #fff; }
    .tag { position: absolute; left: 2px; top: 595px; width: 38px; height: 10px; line-height: 10px; background: #fff; color: #000; }
    .tag span { margin-left: 2px; transform: scaleX(0.86); }
    .m1 { margin: 1px 0 114px; }
    .m2 { position: relative; margin-bottom: 60px; }
    .m2::before { content: ""; position: absolute; left: 2px; top: 1px; width: 4px; height: 10px; background: #f00; }
    .m2 span { position: relative; }
    .vol { margin-top: 1px; }

    .seg { flex: none; }
    .s-blue { background: #000080; }
    .s-purple { background: #7a007a; }
    .s-red { background: #7a0000; }
    .s-gray { background: #404040; display: flex; justify-content: flex-end; padding-right: 1px; box-sizing: border-box; }
    .s-green { background: #006400; }
    .s-gap { background: #000; }
    .s-flag { background: #6e6e6e; color: #00ff00; font-size: 13px; line-height: 13px; text-align: center; overflow: hidden; letter-spacing: 0.5px; }
    .s-gray i { font-style: normal; font-size: 11px; line-height: 13px; font-weight: 700; color: #fff; transform: scaleX(0.8); }
    .w24 { width: 24px; } .w39 { width: 39px; } .w40 { width: 40px; } .w41 { width: 41px; } .w61 { width: 61px; }
    .w63 { width: 63px; } .w64 { width: 64px; } .w149 { width: 149px; }
    .w8 { width: 8px; }

    svg { shape-rendering: crispEdges; }
    polyline { fill: none; stroke-width: 1; }
    .green { stroke: #00ff00; } .green2 { stroke: #32cd32; } .gold { stroke: #e6b800; } .sky { stroke: #1e90ff; }
    .red { stroke: #ff0000; } .magenta { stroke: #ff00ff; } .blue { stroke: #0000ff; }
    .blue-b { stroke: #0000ff; stroke-width: 2; }
    .blue-t { stroke: #0a0aff; stroke-width: 2.5; }
    .yellow-t { stroke: #ffff00; stroke-width: 2.5; }
    .white-t { stroke: #ffffff; stroke-width: 2.5; }
    .ylw { stroke: #ffff00; }
    .ch { stroke: #ee82ee; stroke-width: 2.5; fill: none; }
    .ch-d { stroke: #ee82ee; stroke-width: 1; stroke-dasharray: 3 5; }
    .h-blue { stroke: #0000ff; stroke-dasharray: 4 3; }
    .h-red { stroke: #ff0000; stroke-dasharray: 4 3; }
    .h-sandy { stroke: #f4a460; stroke-dasharray: 3 3; }
    .h-pale { stroke: #f0ded6; stroke-dasharray: 3 3; }
    .o-sandy { stroke: #f4a460; stroke-dasharray: 4 2; }
    .o-pale { stroke: #e8d4d0; stroke-dasharray: 4 2; }
    .hl-blue { stroke: #1e90ff; } .hl-red { stroke: #ff0000; } .hl-gray { stroke: #778899; }
    .c-w { fill: #fff; stroke: none; } .c-r { fill: #ff0000; stroke: none; }
    .w-c-w { stroke: #fff; } .w-c-r { stroke: #ff0000; }
    .ring { fill: none; stroke: #ff0000; stroke-width: 1.3; shape-rendering: auto; }
    .arch-y { fill: #ffff00; shape-rendering: auto; }
    .arch-r { fill: #ff0000; shape-rendering: auto; }
    .lv-sky { stroke: #87cefa; stroke-width: 2; stroke-dasharray: 2 6; }
    .lv-pink { stroke: #ffc8d8; stroke-width: 2; stroke-dasharray: 2 6; }
    .lv-white { stroke: #fff; stroke-dasharray: 18 6; }
    .lv-yellow { stroke: #ffff00; stroke-dasharray: 18 6; }
    .lv-orange { stroke: #ffa500; stroke-dasharray: 18 6; }
    .band { fill: #000084; }
    .b-orange { stroke: #ffa500; fill: none; } .b-red { stroke: #ff0000; fill: none; }
    .b-yellow { stroke: #ffff00; fill: none; } .b-white { stroke: #fff; fill: none; }
    text { font-family: "Noto Sans CJK JP", "Liberation Sans", sans-serif; fill: #fff; }
    .t-latin { font-family: "Liberation Sans", sans-serif; }
    .t-big { font-family: "Open Sans", sans-serif; font-weight: 300; }
    .t-num { font-family: "Liberation Serif", serif; font-weight: 700; }
    .t-orange { fill: #ffa500; font-family: "Liberation Sans", sans-serif; }
    .t-red { fill: #ff0000; font-family: "Liberation Sans", sans-serif; }
    .t-yellow { fill: #ffff00; font-family: "Liberation Sans", sans-serif; }
    .t-white { fill: #e8e8e8; font-family: "Liberation Sans", sans-serif; }
    .macdz { stroke: #ff0000; stroke-width: 2; }
    .m-pink { stroke: #e8709a; stroke-width: 2.5; }
    .m-green { stroke: #32cd32; stroke-width: 2.5; }
    .m-sig { stroke: #fff; stroke-dasharray: 2 4; }
  `;

  private mainSvg() {
    return svg`
      <rect class="band" x="3" y="27" width="1647" height="19"></rect>
      ${hLines.map(([c, y]) => svg`<line class=${c} x1="3" x2="1875" y1=${y} y2=${y}></line>`)}
      ${hatchLines.map((h) => svg`<line class=${h.cls} x1=${h.x} x2=${h.x} y1=${h.a} y2=${h.b}></line>`)}
      ${clouds.map((c) => {
        const out = [];
        const x0 = c.top[0][0], x1 = c.top[c.top.length - 1][0];
        for (let i = Math.ceil((x0 - 3.5) / 8); 3.5 + 8 * i < x1; i++) {
          const x = 3.5 + 8 * i, a = yAt(c.top, x), b = yAt(c.bot, x);
          if (!isNaN(a) && !isNaN(b) && b > a) out.push(svg`<line class="h-${c.cls}" x1=${x} x2=${x} y1=${a} y2=${b}></line>`);
        }
        return svg`${out}<polyline class="o-${c.cls}" points=${str(c.top)}></polyline><polyline class="o-${c.cls}" points=${str(c.bot)}></polyline>`;
      })}
      <polyline class="o-pale" points=${str(p('D', [65, 1210, 120, 1210, 145, 1170, 185, 1100, 205, 1070, 245, 1000, 285, 925, 300, 880, 345, 815]))}></polyline>
      <polyline class="ylw" points=${str(Y1.slice(2))}></polyline>
      <polyline class="ylw" points=${str(Y2)}></polyline>
      ${candles.map((c) => svg`<line class="w-${c.cls}" x1=${c.wx} x2=${c.wx} y1=${c.hi} y2=${c.lo}></line><rect class=${c.cls} x=${c.bx} y=${c.t} width="5" height=${c.h}></rect>`)}
      ${levels.map(([c, a, b, y]) => svg`<line class=${c} x1=${a} x2=${b} y1=${y} y2=${y}></line>`)}
      ${lines.map(([c, pts]) => svg`<polyline class=${c} points=${str(pts)}></polyline>`)}
      <line class="ch" x1="688" y1="3" x2="1720" y2="846"></line>
      <line class="ch" x1="961" y1="3" x2="1875" y2="748"></line>
      <line class="ch-d" x1="824" y1="3" x2="1853" y2="843"></line>
      ${rings.map((q) => svg`<circle class="ring" cx=${q[0]} cy=${q[1]} r="4"></circle>`)}
      ${arches.map(([x, y, k]) => svg`<path class=${k === 'y' ? 'arch-y' : 'arch-r'} d=${archPath(x, y, k)}></path>`)}
      ${boxes.map(([t, c, a, b, y1, y2, ty]) => svg`<rect class="b-${c}" x=${a + 0.5} y=${y1 + 0.5} width=${b - a} height=${y2 - y1}></rect>${txt(t, a + 3, b - 2, ty, 13, 't-' + c)}`)}
      ${labels.map(([t, a, b, y]) => txt(t, a, b, y, 13, ''))}
      ${txt('USDJPY,H1\u00a0\u00a0143.050 143.050 143.050 143.050', 18, 215, 10.5, 10, 't-latin')}
      ${txt('Channel size = 1143 Slope = -33.53', 10, 160, 86, 10, 't-latin')}
      ${txt('USDJPY H1', 72, 408, 114, 62, 't-big')}
      ${txt('5/6 06:20 更新', 1787, 1870, 11, 12, '')}
      ${txt('4', 1559, 1565, 183, 14, 't-num')}
      ${txt('1', 1559, 1565, 464, 14, 't-num')}
      ${txt('3', 1559, 1566, 531, 14, 't-num')}
      ${txt('2', 1559, 1566, 665, 14, 't-num')}
    `;
  }

  private macdSvg() {
    return svg`
      <line class="macdz" x1="3" x2="1875" y1="981" y2="981"></line>
      <polyline class="m-sig" points=${str(macdSignal)}></polyline>
      ${macdSeg.map(([c, pts]) => svg`<polyline class=${c} points=${str(pts)}></polyline>`)}
      ${txt('H1 macd (12)', 6, 66, 858, 10, 't-latin')}
    `;
  }

  private gg(label: string) {
    return html`<div class="seg s-gray w40"><i>${label}</i></div><div class="seg s-green w8"></div>`;
  }

  render() {
    return html`
      <div class="chart">
        <div class="row main">
          <div class="plot"><svg width="1872" height="843" viewBox="3 3 1872 843">${this.mainSvg()}</svg></div>
          <div class="axis">
            <div>${ticks.map((t) => html`<div class="tick"><span>${t}</span></div>`)}</div>
            <div class="tag"><span>143.050</span></div>
          </div>
        </div>
        <div class="row macd">
          <div class="plot"><svg width="1872" height="211" viewBox="3 849 1872 211">${this.macdSvg()}</svg></div>
          <div class="axis">
            <div class="m1"><span>0.709</span></div>
            <div class="m2"><span>0.00</span></div>
            <div><span>-0.429</span></div>
          </div>
        </div>
        <div class="row strip">
          <div class="plot">
            <div class="seg s-blue w24"></div><div class="seg s-purple w40"></div>${this.gg('5/2')}
            <div class="seg s-red w64"></div><div class="seg s-blue w40"></div><div class="seg s-purple w41"></div>${this.gg('5/5')}
            <div class="seg s-red w64"></div><div class="seg s-blue w40"></div><div class="seg s-purple w41"></div>${this.gg('5/6')}
            <div class="seg s-red w63"></div><div class="seg s-blue w41"></div><div class="seg s-purple w39"></div>${this.gg('5/7')}
            <div class="seg s-red w64"></div><div class="seg s-gap w149"></div>
            <div class="seg s-flag w61">macd ON</div>
          </div>
          <div class="axis"><div class="vol"><span>200000</span></div></div>
        </div>
      </div>
    `;
  }
}
